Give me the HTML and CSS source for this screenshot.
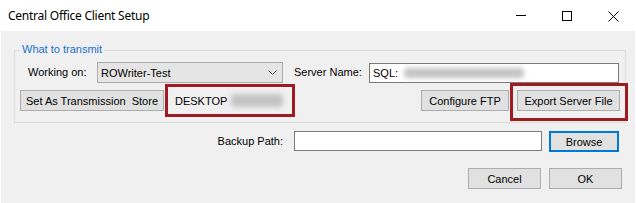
FILE: index.html
```html
<!DOCTYPE html>
<html>
<head>
<meta charset="utf-8">
<title>Central Office Client Setup</title>
<link rel="stylesheet" href="styles.css">
</head>
<body>
<div class="window">
  <div class="titlebar">
    <div class="title">Central Office Client Setup</div>
    <div class="caption-btns">
      <div class="cap"><svg width="10" height="10" viewBox="0 0 10 10"><line x1="0" y1="4.5" x2="10" y2="4.5" stroke="#000" stroke-width="1"/></svg></div>
      <div class="cap"><svg width="10" height="10" viewBox="0 0 10 10"><rect x="0.5" y="0.5" width="9" height="9" fill="none" stroke="#000" stroke-width="1"/></svg></div>
      <div class="cap"><svg width="11" height="11" viewBox="0 0 11 11"><path d="M0.5 0.5 L10.5 10.5 M10.5 0.5 L0.5 10.5" stroke="#000" stroke-width="1" fill="none"/></svg></div>
    </div>
  </div>
  <div class="client">
    <div class="group">
      <div class="group-title">What to transmit</div>
      <div class="row row1">
        <span class="lbl lbl-working">Working on:</span>
        <div class="combo">
          <span>ROWriter-Test</span>
          <svg class="chev" width="9" height="6" viewBox="0 0 9 6"><polyline points="0.5,0.5 4.5,4.5 8.5,0.5" fill="none" stroke="#555" stroke-width="1"/></svg>
        </div>
        <span class="lbl lbl-server">Server Name:</span>
        <div class="textbox server"><span>SQL:</span><span class="blur blur-sql"></span></div>
      </div>
      <div class="row row2">
        <button class="btn btn-store">Set As Transmission&nbsp; Store</button>
        <div class="callout callout-desktop"><span>DESKTOP</span><span class="blur blur-desk"></span></div>
        <button class="btn btn-ftp">Configure FTP</button>
        <div class="callout callout-export"><button class="btn btn-export">Export Server File</button></div>
      </div>
    </div>
    <div class="row backup-row">
      <span class="lbl">Backup Path:</span>
      <div class="textbox backup"></div>
      <button class="btn btn-browse">Browse</button>
    </div>
    <div class="row actions">
      <button class="btn btn-action">Cancel</button>
      <button class="btn btn-action">OK</button>
    </div>
  </div>
</div>
</body>
</html>
```
FILE: styles.css
```css
html, body {
  margin: 0;
  padding: 0;
  background: #ffffff;
}
body {
  font-family: "Liberation Sans", Arial, sans-serif;
  font-size: 11px;
  color: #000;
}
.window {
  width: 636px;
  height: 203px;
  display: flex;
  flex-direction: column;
  overflow: hidden;
}
.titlebar {
  height: 31px;
  flex: none;
  display: flex;
  background: #ffffff;
}
.title {
  flex: 1;
  padding-left: 8px;
  font-family: "Noto Sans", sans-serif;
  font-size: 12px;
  letter-spacing: -0.25px;
  line-height: 31px;
  color: #000;
}
.caption-btns {
  display: flex;
}
.cap {
  width: 46px;
  height: 31px;
  display: flex;
  justify-content: center;
  align-items: flex-start;
  padding-top: 11px;
  box-sizing: border-box;
}
.cap svg {
  display: block;
}
.client {
  flex: 1;
  margin: 0 1px;
  background: #f0f0f0;
  display: flex;
  flex-direction: column;
}
.group {
  margin-top: 19px;
  margin-left: 13px;
  width: 612px;
  box-sizing: border-box;
  border: 1px solid #dcdcdc;
  padding: 0 5px 11px 5px;
}
.group-title {
  width: fit-content;
  margin-top: -8px;
  padding: 0 2px;
  line-height: 13px;
  background: #f0f0f0;
  color: #1a6fd0;
}
.row {
  display: flex;
  align-items: flex-start;
}
.lbl {
  line-height: 21px;
  white-space: nowrap;
}
.row1 {
  margin-top: 6px;
  height: 21px;
}
.lbl-working {
  margin-left: 8px;
  width: 69px;
}
.combo {
  width: 186px;
  height: 21px;
  box-sizing: border-box;
  border: 1px solid #acacac;
  background: #e5e5e5;
  padding: 0 5px 0 3px;
  display: flex;
  align-items: center;
  justify-content: space-between;
}
.chev {
  display: block;
}
.lbl-server {
  margin-left: 11px;
  width: 75px;
}
.textbox {
  height: 20px;
  box-sizing: border-box;
  border: 1px solid #7a7a7a;
  background: #ffffff;
  display: flex;
  align-items: center;
  padding-left: 3px;
}
.server {
  width: 250px;
  margin-top: 1px;
}
.blur {
  display: inline-block;
  background: #c4c4c4;
  border-radius: 4px;
  filter: blur(2.5px);
}
.blur-sql {
  width: 120px;
  height: 10px;
  margin-left: 6px;
}
.row2 {
  margin-top: 7px;
  height: 21px;
}
.btn {
  box-sizing: border-box;
  height: 21px;
  margin: 0;
  padding: 0;
  border: 1px solid #adadad;
  background: #e1e1e1;
  font-family: inherit;
  font-size: 11px;
  color: #000;
  white-space: nowrap;
}
.btn-store {
  width: 144px;
}
.callout {
  box-sizing: border-box;
  border: 3px solid #a01a22;
}
.callout-desktop {
  margin: -6px 0 -6px 1px;
  width: 130px;
  height: 33px;
  padding-left: 7px;
  display: flex;
  align-items: center;
}
.blur-desk {
  width: 52px;
  height: 13px;
  margin-left: 4px;
}
.btn-ftp {
  margin-left: auto;
  width: 88px;
}
.callout-export {
  display: flex;
  margin: -7px -8px -10px 1px;
  padding: 4px 5px 7px 4px;
}
.btn-export {
  width: 103px;
}
.backup-row {
  margin-top: 8px;
  justify-content: flex-end;
  padding-right: 16px;
}
.backup {
  width: 248px;
  margin-left: 11px;
}
.btn-browse {
  width: 70px;
  margin-left: 7px;
  border: 2px solid #0078d7;
}
.actions {
  margin-top: 16px;
  justify-content: flex-end;
  padding-right: 13px;
  gap: 8px;
}
.btn-action {
  width: 73px;
}
```
